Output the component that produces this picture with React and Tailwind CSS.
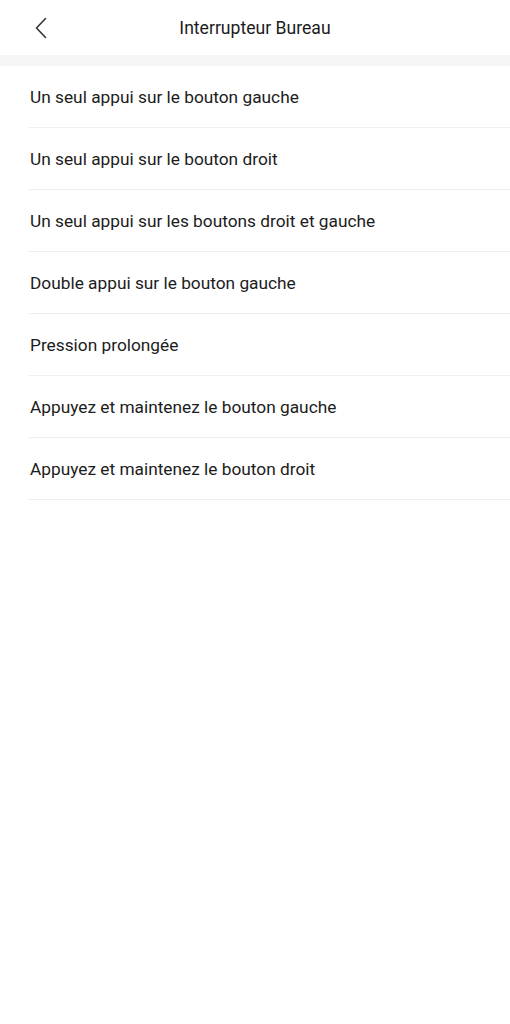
import React from 'react';

const ITEMS = [
  'Un seul appui sur le bouton gauche',
  'Un seul appui sur le bouton droit',
  'Un seul appui sur les boutons droit et gauche',
  'Double appui sur le bouton gauche',
  'Pression prolongée',
  'Appuyez et maintenez le bouton gauche',
  'Appuyez et maintenez le bouton droit',
];

export default function App() {
  return (
    <div className="min-h-[1024px] bg-white text-[#1c1c1c]" style={{ fontFamily: 'Roboto, "Noto Sans", sans-serif' }}>
      {/* Header */}
      <div className="relative flex h-[55px] items-center justify-center pt-[3px]">
        <button className="absolute left-[34px] top-[17px] text-[#333]">
          <svg width="14" height="22" viewBox="0 0 14 22" fill="none" stroke="currentColor" strokeWidth="1.6" strokeLinecap="round" strokeLinejoin="round">
            <path d="M11.5 1.5 L2.5 11 L11.5 20.5" />
          </svg>
        </button>
        <h1 className="text-[17.6px] leading-none">Interrupteur Bureau</h1>
      </div>
      <div className="h-[11px] bg-[#f5f5f5]" />

      {/* List */}
      <ul className="pl-[29px]">
        {ITEMS.map((item, i) => (
          <li key={i} className="flex h-[62px] items-center border-b border-[#eeeeee] pl-px pt-[2px] text-[17.3px]">
            {item}
          </li>
        ))}
      </ul>
    </div>
  );
}
